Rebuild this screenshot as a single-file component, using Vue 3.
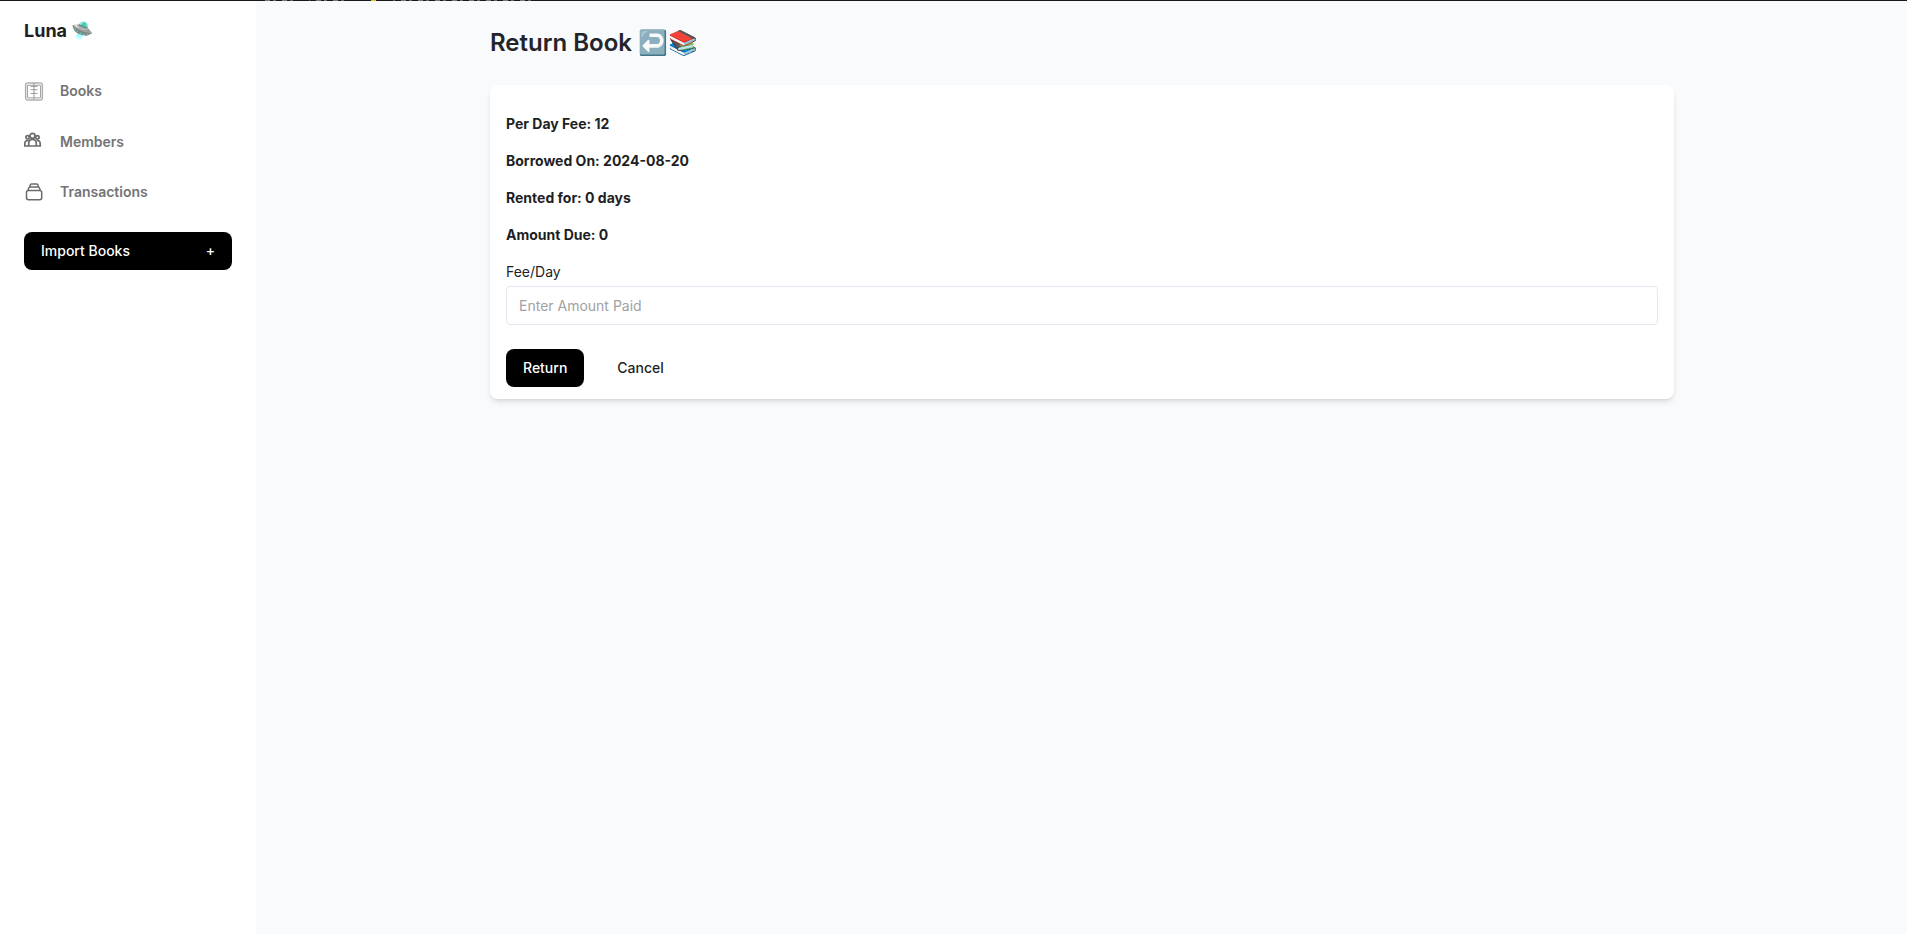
<script setup>
const details = [
  'Per Day Fee: 12',
  'Borrowed On: 2024-08-20',
  'Rented for: 0 days',
  'Amount Due: 0',
]
</script>

<template>
  <div class="page">
    <div class="edge"><i class="specks"></i></div>
    <div class="shell">
      <aside class="sidebar">
        <div class="brand">Luna <span>🛸</span></div>
        <nav>
          <a class="link">
            <svg class="icon" viewBox="0 0 20 20" width="20" height="20" fill="none">
              <rect x="1.900" y="2.400" width="16.200" height="16.200" rx="1.200" stroke="#d6d6d8" stroke-width="1.800" />
              <rect x="1.400" y="1.900" width="17.200" height="17.200" rx="2" stroke="#9c9c9f" stroke-width=".8" />
              <path d="M3.500 4.300h13v12.500h-13z" stroke="#9c9c9f" stroke-width=".9" />
              <path d="M10 1.800v17.200" stroke="#a3a3a6" stroke-width="1.100" />
              <path d="M6.500 5.400h7M6.500 8.700h7M6.500 12.400h7" stroke="#858588" stroke-width=".8" />
            </svg>
            <span>Books</span>
          </a>
          <a class="link">
            <svg class="icon" viewBox="0 0 20 20" width="20" height="20" fill="none" stroke="#6b6b6e" stroke-width="1.700">
              <circle cx="8.500" cy="4.800" r="2.500" />
              <circle cx="3.600" cy="6.300" r="1.700" />
              <circle cx="13.400" cy="6.300" r="1.700" />
              <path d="M4.700 15v-2.800c0-5 7.600-5 7.600 0v2.800zM4.200 15H.8v-2.500c0-2.100 1.500-3.200 3.500-3M12.800 15h3.400v-2.500c0-2.100-1.500-3.200-3.500-3" />
            </svg>
            <span>Members</span>
          </a>
          <a class="link">
            <svg class="icon" viewBox="0 0 20 20" width="20" height="20" fill="none" stroke="#6b6b6e" stroke-width="1.500" stroke-linejoin="round">
              <rect x="2.500" y="8.400" width="15.200" height="9.300" rx="1.900" />
              <path d="M4 8.500l.6-2.200q.3-1.200 1.400-1.200h8.200q1.100 0 1.400 1.200l.6 2.200M5.700 5.100l.4-1.800q.3-1.200 1.400-1.200h5.200q1.100 0 1.400 1.200l.4 1.800" />
            </svg>
            <span>Transactions</span>
          </a>
        </nav>
        <button class="button import"><span>Import Books</span><span>+</span></button>
      </aside>
      <main>
        <section class="content">
          <h1>Return Book <span class="emoji">↩️📚</span></h1>
          <form class="card" @submit.prevent>
            <p v-for="detail in details" :key="detail">{{ detail }}</p>
            <label for="amount">Fee/Day</label>
            <input id="amount" type="text" placeholder="Enter Amount Paid" />
            <div class="actions">
              <button class="button">Return</button>
              <button class="button cancel" type="button">Cancel</button>
            </div>
          </form>
        </section>
      </main>
    </div>
  </div>
</template>

<style>
body { margin: 0; overflow: hidden; }
</style>

<style scoped>
* { box-sizing: border-box; }
.page { height: 934px; display: flex; flex-direction: column; background: #f8fafc; color: #1e1f25; font: 14px/21px Inter, "Noto Color Emoji", sans-serif; }
.edge { height: 1px; flex: none; background: #19181d; }
.specks {
  display: block; width: 270px; height: 1px; margin-left: 265px;
  background: linear-gradient(#e8be22, #e8be22) 106px 0 / 5px 1px no-repeat,
    linear-gradient(#19181d, #19181d) 85px 0 / 43px 1px no-repeat,
    linear-gradient(#19181d, #19181d) 30px 0 / 14px 1px no-repeat,
    repeating-linear-gradient(90deg, #77767a 0 5px, #19181d 5px 8px, #67666a 8px 11px, #19181d 11px 17px);
}
.shell { flex: 1; display: flex; }
.sidebar { width: 256px; flex: none; background: #fff; padding: 16px 24px; }
.brand { height: 28px; font-size: 18px; line-height: 28px; font-weight: 700; white-space: nowrap; }
nav { margin-top: 20.4px; display: grid; grid-auto-rows: 50.5px; }
.link { display: flex; align-items: center; gap: 16px; color: #737376; font-weight: 600; }
.icon { flex: none; }
.button { display: flex; align-items: center; justify-content: center; height: 38px; padding: 0 17px; border: 0; border-radius: 8px; background: #000; color: #fff; font: 500 14px/20px Inter, sans-serif; }
.import { width: 208px; justify-content: space-between; margin-top: 15.1px; }
main { flex: 1; padding-left: 234px; }
.content { width: 1184px; }
h1 { margin: 0; height: 84px; padding-top: 25px; font-size: 24px; line-height: 34px; font-weight: 600; color: #23242a; white-space: nowrap; }
.emoji { letter-spacing: .6px; }
.card { height: 314px; padding: 28px 16px 12px; background: #fff; border-radius: 8px; box-shadow: 0 4px 6px -1px rgb(0 0 0 / .1), 0 2px 4px -2px rgb(0 0 0 / .1); }
p { margin: 0 0 16px; font-weight: 700; }
label { display: block; height: 25px; }
input { display: block; width: 100%; height: 39px; padding: 0 12px; border: 1px solid #e2e8f0; border-radius: 4px; background: #fff; font: 14px/20px Inter, sans-serif; }
input::placeholder { color: #a1a1a3; opacity: 1; }
.actions { display: flex; gap: 16px; margin-top: 24px; }
.cancel { background: transparent; color: #1e1f25; }
</style>
